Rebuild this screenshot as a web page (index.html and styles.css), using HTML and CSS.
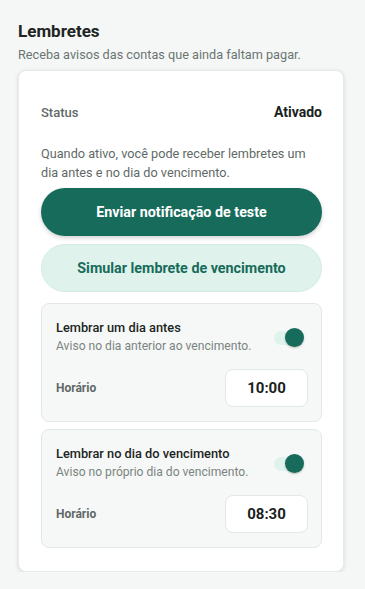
FILE: index.html
```html
<!DOCTYPE html>
<html lang="pt-BR">
<head>
<meta charset="utf-8">
<title>Lembretes</title>
<link rel="stylesheet" href="styles.css">
</head>
<body>
<main class="page">
  <section class="section">
    <h2 class="section-title">Lembretes</h2>
    <p class="section-sub">Receba avisos das contas que ainda faltam pagar.</p>
    <div class="card">
      <div class="status-row">
        <span class="status-label">Status</span>
        <span class="status-value">Ativado</span>
      </div>
      <p class="desc">Quando ativo, você pode receber lembretes um dia antes e no dia do vencimento.</p>
      <button class="btn btn-primary">Enviar notificação de teste</button>
      <button class="btn btn-secondary">Simular lembrete de vencimento</button>
      <div class="option">
        <div class="option-head">
          <div class="option-text">
            <div class="option-title">Lembrar um dia antes</div>
            <div class="option-sub">Aviso no dia anterior ao vencimento.</div>
          </div>
          <span class="switch"><span class="track"></span><span class="thumb"></span></span>
        </div>
        <div class="time-row">
          <span class="time-label">Horário</span>
          <span class="time-box">10:00</span>
        </div>
      </div>
      <div class="option">
        <div class="option-head">
          <div class="option-text">
            <div class="option-title">Lembrar no dia do vencimento</div>
            <div class="option-sub">Aviso no próprio dia do vencimento.</div>
          </div>
          <span class="switch"><span class="track"></span><span class="thumb"></span></span>
        </div>
        <div class="time-row">
          <span class="time-label">Horário</span>
          <span class="time-box">08:30</span>
        </div>
      </div>
    </div>
  </section>
</main>
</body>
</html>
```

FILE: styles.css
```css
* { box-sizing: border-box; }
html, body {
  margin: 0;
  padding: 0;
  background: #f5f7f6;
  font-family: Roboto, "Noto Sans", "Liberation Sans", sans-serif;
  color: #1c2523;
}
.page {
  padding: 19px 21px 0 18px;
}
.section-title {
  margin: 0;
  font-size: 17px;
  font-weight: 700;
  line-height: 24px;
  color: #1d2422;
}
.section-sub {
  margin: 3px 0 0;
  font-size: 12.7px;
  line-height: 18px;
  color: #6b7572;
}
.card {
  margin-top: 6px;
  background: #ffffff;
  border: 1px solid #e6ebe9;
  border-radius: 8px;
  box-shadow: 0 1px 4px rgba(0, 0, 0, 0.12);
  padding: 21px 21px 23px 22px;
  display: flex;
  flex-direction: column;
}
.status-row {
  height: 40px;
  display: flex;
  align-items: center;
  justify-content: space-between;
}
.status-label {
  font-size: 13px;
  font-weight: 500;
  color: #5f6966;
}
.status-value {
  font-size: 14px;
  font-weight: 700;
  color: #1a1f1e;
}
.desc {
  margin: 12px 0 0;
  font-size: 12.7px;
  line-height: 19px;
  color: #5f6966;
}
.btn {
  display: block;
  width: 100%;
  height: 48px;
  border-radius: 24px;
  font-family: inherit;
  font-size: 14.3px;
  font-weight: 700;
  cursor: pointer;
}
.btn-primary {
  margin-top: 6px;
  background: #176b5b;
  color: #ffffff;
  border: none;
  box-shadow: 0 2px 4px rgba(0, 0, 0, 0.18);
}
.btn-secondary {
  margin-top: 8px;
  background: #dff3ec;
  color: #176b5b;
  border: 1px solid #d2ebe2;
}
.option {
  margin-top: 11px;
  background: #f6f8f7;
  border: 1px solid #e2e8e6;
  border-radius: 8px;
  padding: 14px 13px 14px 14px;
}
.option + .option {
  margin-top: 7px;
}
.option-head {
  display: flex;
  align-items: center;
  justify-content: space-between;
}
.option-title {
  font-size: 12.8px;
  font-weight: 500;
  line-height: 19px;
  color: #1c2523;
}
.option-sub {
  font-size: 12.1px;
  line-height: 19px;
  color: #7a8481;
}
.switch {
  position: relative;
  width: 30px;
  height: 20px;
  margin-right: 4px;
  margin-top: 2px;
  flex: none;
}
.track {
  position: absolute;
  left: 0;
  top: 3px;
  width: 28px;
  height: 14px;
  border-radius: 7px;
  background: #dff3ec;
}
.thumb {
  position: absolute;
  right: 0;
  top: 0;
  width: 19px;
  height: 19px;
  border-radius: 50%;
  background: #176b5b;
  box-shadow: 0 1px 2px rgba(0, 0, 0, 0.25);
}
.time-row {
  margin-top: 13px;
  display: flex;
  align-items: center;
  justify-content: space-between;
}
.time-label {
  font-size: 12px;
  font-weight: 700;
  color: #5f6966;
}
.time-box {
  width: 83px;
  height: 38px;
  background: #ffffff;
  border: 1px solid #e2e8e6;
  border-radius: 8px;
  display: flex;
  align-items: center;
  justify-content: center;
  font-size: 15px;
  font-weight: 700;
  color: #1a1f1e;
}
```
